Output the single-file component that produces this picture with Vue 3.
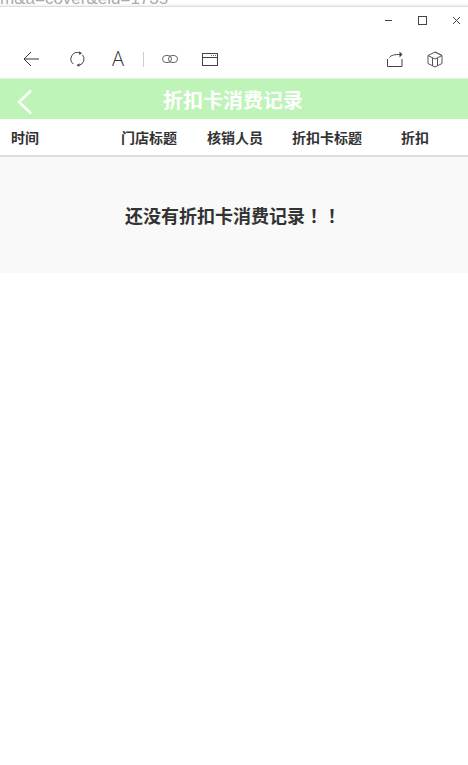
<template>
  <div class="page">
    <div class="behind">
      <span class="behind__url">m&amp;a=cover&amp;eid=1735</span>
    </div>

    <div class="titlebar">
      <button class="win-btn">
        <svg width="10" height="10" viewBox="0 0 10 10"><path d="M1 4.500h7" stroke="#444" fill="none" /></svg>
      </button>
      <button class="win-btn">
        <svg width="10" height="10" viewBox="0 0 10 10"><rect x="0.500" y="0.500" width="8" height="8" stroke="#444" fill="none" /></svg>
      </button>
      <button class="win-btn">
        <svg width="10" height="10" viewBox="0 0 10 10"><path d="M1 1l7 7M8 1l-7 7" stroke="#444" fill="none" /></svg>
      </button>
    </div>

    <div class="toolbar">
      <svg class="tool tool--back" width="16" height="16" viewBox="0 0 16 16"><path d="M8 1L1 8l7 7M1 8h15" stroke="#333" fill="none" /></svg>
      <svg class="tool tool--reload" width="15" height="16" viewBox="0 0 15 16">
        <path d="M12.500 3.800A6.500 6.500 0 0 1 8.600 14.400M3.300 13A6.500 6.500 0 0 1 9.700 1.900" stroke="#444" fill="none" />
        <path d="M9 0.300l3 1.900-2.700 1.800z" fill="#444" />
        <path d="M9.500 12.200l-3 2 2.700 1.600z" fill="#444" />
      </svg>
      <span class="tool tool--font">A</span>
      <span class="tool-sep"></span>
      <svg class="tool tool--link" width="16" height="8" viewBox="0 0 16 8">
        <rect x="0.500" y="0.500" width="9" height="7" rx="3.500" stroke="#666" fill="none" />
        <rect x="6.500" y="0.500" width="9" height="7" rx="3.500" stroke="#666" fill="none" />
      </svg>
      <svg class="tool tool--panel" width="16" height="13" viewBox="0 0 16 13">
        <rect x="0.500" y="0.500" width="15" height="12" stroke="#444" fill="none" />
        <path d="M0.500 4.500h15" stroke="#444" />
        <path d="M9 2.500h1M11 2.500h1M13 2.500h1" stroke="#666" />
      </svg>
      <div class="toolbar__right">
        <svg class="tool" width="16" height="16" viewBox="0 0 16 16">
          <path d="M0.500 8v7.500h14.500V8" stroke="#444" fill="none" />
          <path d="M2.500 6.500C4 4 8 3.500 13 3.500" stroke="#444" fill="none" />
          <path d="M12.500 0.500l3 3-3 3z" fill="#444" />
        </svg>
        <svg class="tool tool--box" width="16" height="17" viewBox="0 0 16 17">
          <path d="M8 1l7 3.500v8L8 16l-7-3.500v-8zM1 4.500L8 8l7-3.500L8 1M5.500 7v8M10.500 7v8" stroke="#555" fill="none" />
        </svg>
      </div>
    </div>

    <header class="head">
      <svg class="head__back" width="16" height="26" viewBox="0 0 16 26"><path d="M14 1.500L2 13l12 11.500" stroke="#fff" stroke-width="2.500" fill="none" /></svg>
      <h1 class="head__title">折扣卡消费记录</h1>
    </header>

    <div class="cols">
      <span class="cols__time">时间</span>
      <span v-for="col in columns" :key="col">{{ col }}</span>
    </div>

    <div class="empty">还没有折扣卡消费记录<span class="empty__mark">！！</span></div>
  </div>
</template>

<script setup>
const columns = ['门店标题', '核销人员', '折扣卡标题', '折扣']
</script>

<style>
html,
body {
  background: #fff;
  overflow: hidden;
}
</style>

<style scoped>
.page {
  width: 468px;
  height: 765px;
  background: #fff;
  overflow: hidden;
  font-family: "Liberation Sans", "Noto Sans CJK SC", sans-serif;
}

.behind {
  height: 6px;
  overflow: hidden;
  background: linear-gradient(#fff 60%, #eee);
  border-bottom: 1px solid #ddd;
}

.behind__url {
  display: block;
  margin-top: -10px;
  font-size: 17px;
  line-height: 17px;
  color: #aaa;
  white-space: nowrap;
}

.titlebar {
  display: flex;
  justify-content: flex-end;
  align-items: center;
  gap: 24px;
  height: 28px;
  padding-right: 6px;
}

.win-btn {
  display: flex;
  width: 10px;
  height: 10px;
  padding: 0;
  border: 0;
  background: transparent;
}

.toolbar {
  display: flex;
  align-items: center;
  height: 38px;
  padding: 5px 25px 0 23px;
}

.tool {
  display: block;
  flex: none;
}

.tool--back {
  margin-right: 31px;
}

.tool--reload {
  margin-right: 27px;
}

.tool--font {
  width: 12px;
  margin-right: 19px;
  font-family: "Open Sans", sans-serif;
  font-size: 20px;
  font-weight: 300;
  line-height: 20px;
  color: #333;
}

.tool-sep {
  width: 1px;
  height: 15px;
  margin-right: 18px;
  background: #ccc;
}

.tool--link {
  margin-right: 24px;
}

.toolbar__right {
  display: flex;
  align-items: center;
  gap: 24px;
  margin-left: auto;
}

.head {
  position: relative;
  display: flex;
  justify-content: center;
  align-items: center;
  height: 40px;
  border-top: 1px solid #e2f3df;
  background: #bef4b8;
}

.head__back {
  position: absolute;
  left: 17px;
  top: 10px;
}

.head__title {
  margin: 0;
  font-size: 20px;
  font-weight: 700;
  color: #fff;
  transform: translateX(-1px);
}

.cols {
  display: grid;
  grid-template-columns: 107px 84px 88px 96px 80px;
  align-items: center;
  height: 36px;
  border-bottom: 2px solid #ddd;
  font-size: 14px;
  font-weight: 700;
  color: #333;
  text-align: center;
}

.cols__time {
  padding-left: 11px;
  text-align: left;
}

.empty {
  display: flex;
  justify-content: center;
  align-items: center;
  height: 116px;
  padding-right: 2px;
  background: #f9f9f9;
  font-size: 18px;
  font-weight: 700;
  color: #333;
}

.empty__mark {
  font-family: "Noto Sans CJK TC", sans-serif;
  text-spacing-trim: space-all;
}
</style>
